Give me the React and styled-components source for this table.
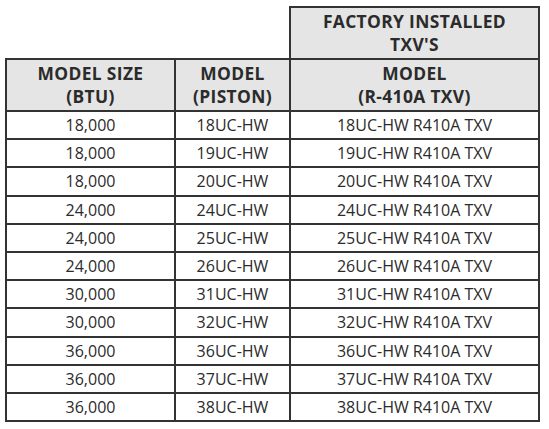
import React from "react";
import styled, { createGlobalStyle } from "styled-components";

const GlobalStyle = createGlobalStyle`
	body {
		margin: 0;
		background: #fff;
		font-family: "Open Sans", "Noto Sans", sans-serif;
	}
`;

const Wrap = styled.div`
	padding: 6px 0 0 5px;
`;

const Table = styled.table`
	border-collapse: collapse;
	table-layout: fixed;
	width: 533px;
	color: #2b2b2b;
`;

const HeadRow = styled.tr`
	height: 52px;
`;

const BodyRow = styled.tr`
	height: 28.2px;
`;

const Blank = styled.th`
	border: none;
	padding: 0;
`;

const HeadCell = styled.th`
	background: #e5e5e5;
	border: 2px solid #333;
	padding: 0;
	font-size: 17.4px;
	letter-spacing: 0.35px;
	font-weight: 700;
	line-height: 23px;
	text-align: center;
	vertical-align: middle;
`;

const Cell = styled.td`
	border: 2px solid #333;
	padding: 0;
	font-size: 16px;
	font-weight: 400;
	text-align: center;
	vertical-align: middle;
	line-height: 20px;
`;

const rows = [
	["18,000", "18UC-HW"],
	["18,000", "19UC-HW"],
	["18,000", "20UC-HW"],
	["24,000", "24UC-HW"],
	["24,000", "25UC-HW"],
	["24,000", "26UC-HW"],
	["30,000", "31UC-HW"],
	["30,000", "32UC-HW"],
	["36,000", "36UC-HW"],
	["36,000", "37UC-HW"],
	["36,000", "38UC-HW"],
];

export default function App() {
	return (
		<>
			<GlobalStyle />
			<Wrap>
				<Table>
					<colgroup>
						<col style={{ width: 169 }} />
						<col style={{ width: 115 }} />
						<col style={{ width: 249 }} />
					</colgroup>
					<thead>
						<HeadRow>
							<Blank colSpan={2} />
							<HeadCell>
								FACTORY INSTALLED
								<br />
								TXV'S
							</HeadCell>
						</HeadRow>
						<HeadRow>
							<HeadCell>
								MODEL SIZE
								<br />
								(BTU)
							</HeadCell>
							<HeadCell>
								MODEL
								<br />
								(PISTON)
							</HeadCell>
							<HeadCell>
								MODEL
								<br />
								(R-410A TXV)
							</HeadCell>
						</HeadRow>
					</thead>
					<tbody>
						{rows.map(([size, model]) => (
							<BodyRow key={model}>
								<Cell>{size}</Cell>
								<Cell>{model}</Cell>
								<Cell>{model} R410A TXV</Cell>
							</BodyRow>
						))}
					</tbody>
				</Table>
			</Wrap>
		</>
	);
}
